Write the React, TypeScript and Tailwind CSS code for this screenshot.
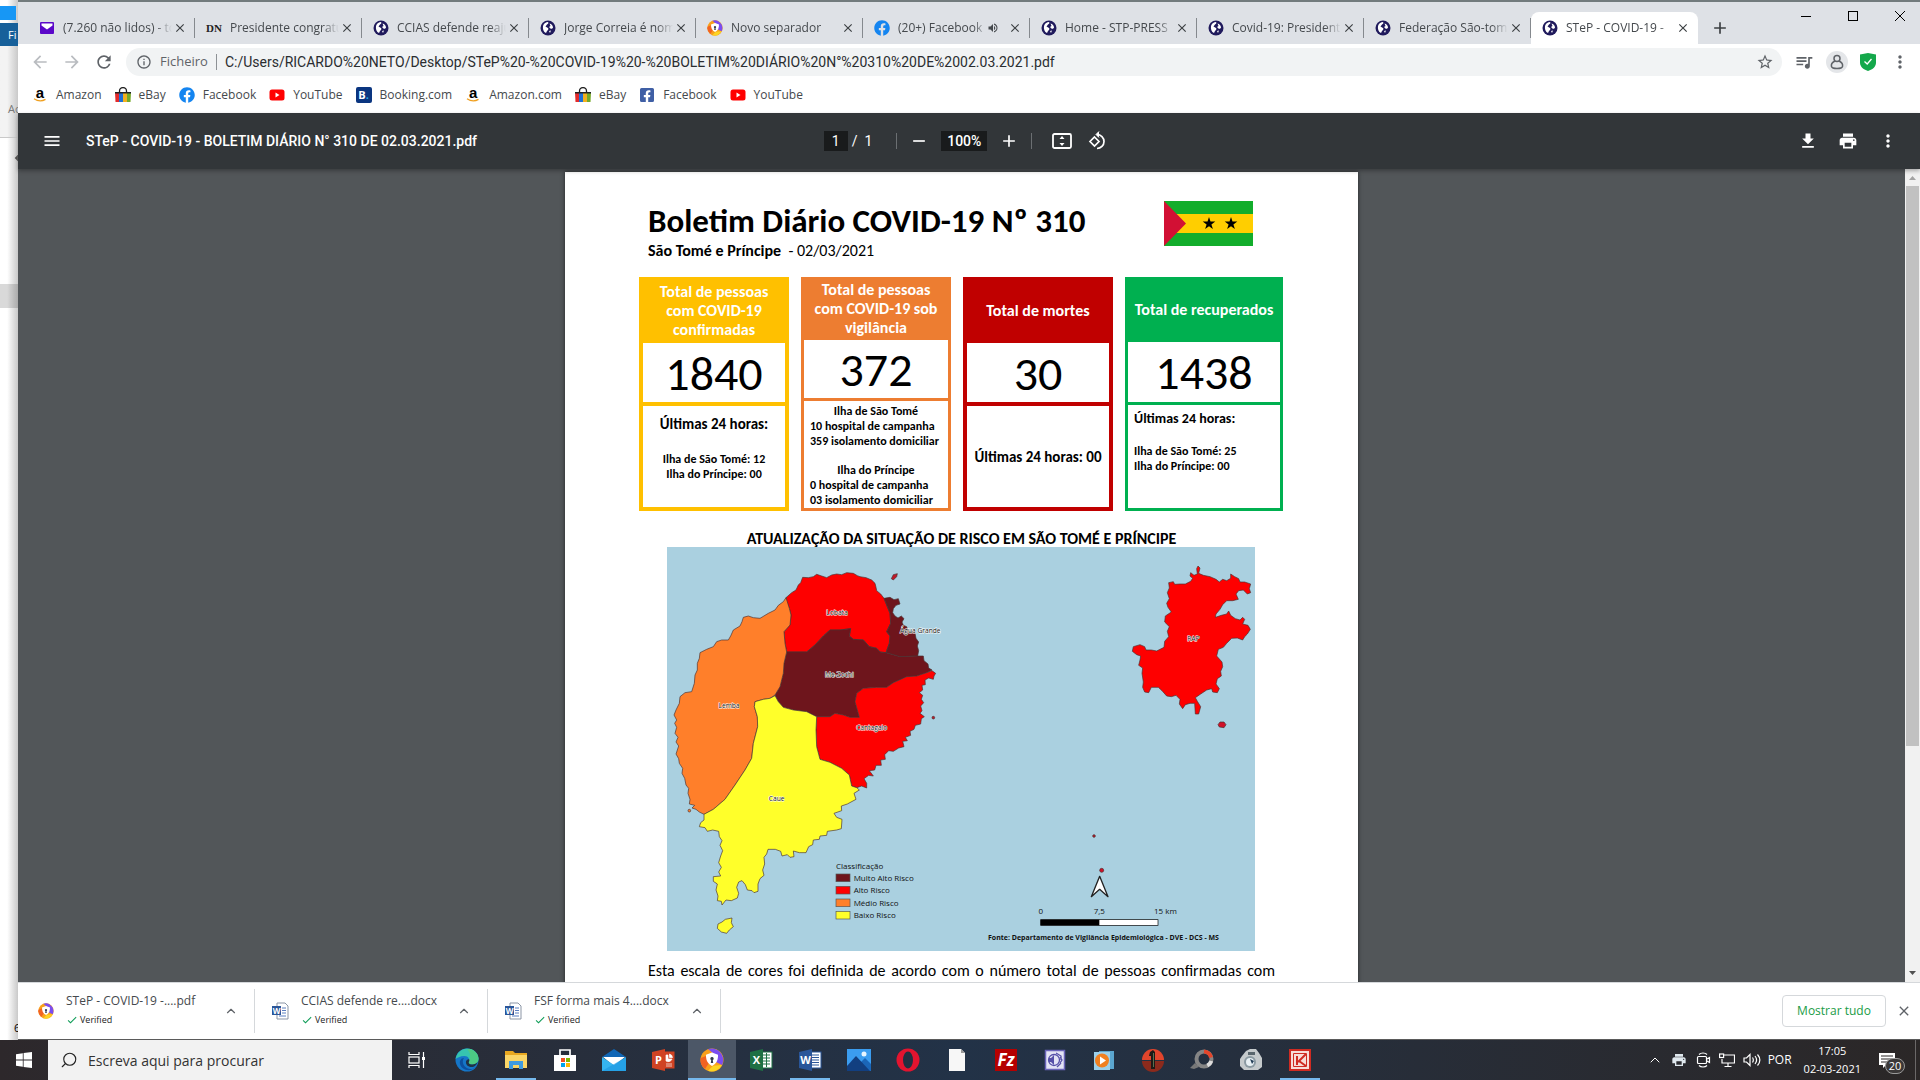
import type { ReactNode } from 'react';
import {
    MdAdd,
    MdArrowBack,
    MdArrowForward,
    MdCheck,
    MdClose,
    MdFileDownload,
    MdInfoOutline,
    MdMenu,
    MdMoreVert,
    MdPrint,
    MdQueueMusic,
    MdRefresh,
    MdRemove,
    MdStarBorder,
    MdVolumeUp,
} from 'react-icons/md';
import { FaFacebook, FaFacebookSquare } from 'react-icons/fa';
import { ChevronUp, Search } from 'lucide-react';

/* ---------- Small logos ---------- */

const GlobeIcon = () => (
    <svg viewBox="0 0 16 16" className="size-4 shrink-0">
        <circle cx="8" cy="8" r="7.500" fill="#201a5c" />
        <path d="M3 6c1-3 3-4 5-4 1 1 0 2-1 2.500L5.500 6.500 8 8c1 1 0 2-1 3l-1 2C3.500 12 2.500 9 3 6zM9.500 3.500c2 .5 3.500 2 3.500 4.500l-2 1-2-2 1.500-1zM9 11l2-.5L10 13z" fill="#fff" />
    </svg>
);

const MailIcon = () => (
    <svg viewBox="0 0 16 16" className="size-4 shrink-0">
        <rect x="1" y="2" width="14" height="12" rx="1" fill="#5b08c9" />
        <path d="M2.500 3.500h11v2L8 9.500 2.500 5.500z" fill="#fff" />
    </svg>
);

const DnIcon = () => <span className="w-4 shrink-0 font-['Liberation_Serif',serif] text-[11px] font-bold text-[#222]">DN</span>;

const AvastIcon = ({ className = 'size-4' }: { className?: string }) => (
    <svg viewBox="0 0 24 24" className={`${className} shrink-0`}>
        <circle cx="12" cy="12" r="11.500" fill="#f9a01b" />
        <path d="M12 .5A11.500 11.500 0 0 1 22 17l-6-3-2-8-6-5z" fill="#7b4df0" />
        <path d="M.7 10A11.500 11.500 0 0 0 5 21l4-6-3-7z" fill="#f26322" />
        <path d="M22 17A11.500 11.500 0 0 1 8 22.800l5-5z" fill="#fcd423" />
        <path d="M12 4.500l6 2.200c.2 5-1.500 9-6 11.300-4.500-2.300-6.200-6.300-6-11.300z" fill="#fff" />
        <path d="M12 9a1.700 1.700 0 0 1 .8 3.200l.4 2.800h-2.400l.4-2.800A1.700 1.700 0 0 1 12 9z" fill="#333c4d" />
    </svg>
);

const AmazonIcon = () => (
    <span className="flex w-4 shrink-0 flex-col items-center">
        <span className="font-['Liberation_Sans',sans-serif] text-[15px] font-bold leading-[11px] text-black">a</span>
        <svg viewBox="0 0 14 4" className="h-1 w-3.5">
            <path d="M1 .8c4 2.600 8 2.600 11.500.6" fill="none" stroke="#f0a020" strokeWidth="1.300" />
        </svg>
    </span>
);

const EbayIcon = () => (
    <svg viewBox="0 0 16 16" className="size-4 shrink-0">
        <path d="M4.500 6V4a3.500 3.500 0 0 1 7 0v2" fill="none" stroke="#222" strokeWidth="1.300" />
        <path d="M0 5h4v10H.5z" fill="#e32b2b" />
        <path d="M4 5h4v10H4z" fill="#1f6fd6" />
        <path d="M8 5h4v10H8z" fill="#f2b01e" />
        <path d="M12 5h4l-.5 10H12z" fill="#75a928" />
        <path d="M0 5h16v1.500H0z" fill="#222" />
    </svg>
);

const YoutubeIcon = () => (
    <svg viewBox="0 0 16 16" className="size-4 shrink-0">
        <rect x=".5" y="2.500" width="15" height="11" rx="2.500" fill="#f00" />
        <path d="M6.500 5.500l4 2.500-4 2.500z" fill="#fff" />
    </svg>
);

const BookingIcon = () => (
    <span className="flex size-4 shrink-0 items-center justify-center rounded-[2px] bg-[#0a3580] text-[11px] font-bold leading-none text-white">
        B<span className="text-[#2aa8e0]">.</span>
    </span>
);

/* ---------- Data ---------- */

const tabs: { title: string; icon: ReactNode; active?: boolean; audio?: boolean }[] = [
    { title: '(7.260 não lidos) - to', icon: <MailIcon /> },
    { title: 'Presidente congratu', icon: <DnIcon /> },
    { title: 'CCIAS defende reaju', icon: <GlobeIcon /> },
    { title: 'Jorge Correia é nom', icon: <GlobeIcon /> },
    { title: 'Novo separador', icon: <AvastIcon /> },
    { title: '(20+) Facebook', icon: <FaFacebook className="size-4 shrink-0 text-[#1585f0]" />, audio: true },
    { title: 'Home - STP-PRESS', icon: <GlobeIcon /> },
    { title: 'Covid-19: President', icon: <GlobeIcon /> },
    { title: 'Federação São-tom', icon: <GlobeIcon /> },
    { title: 'STeP - COVID-19 -', icon: <GlobeIcon />, active: true },
];

const bookmarks: { label: string; icon: ReactNode }[] = [
    { label: 'Amazon', icon: <AmazonIcon /> },
    { label: 'eBay', icon: <EbayIcon /> },
    { label: 'Facebook', icon: <FaFacebook className="size-4 text-[#1585f0]" /> },
    { label: 'YouTube', icon: <YoutubeIcon /> },
    { label: 'Booking.com', icon: <BookingIcon /> },
    { label: 'Amazon.com', icon: <AmazonIcon /> },
    { label: 'eBay', icon: <EbayIcon /> },
    { label: 'Facebook', icon: <FaFacebookSquare className="size-4 text-[#3f5fa5]" /> },
    { label: 'YouTube', icon: <YoutubeIcon /> },
];

const WordFileIcon = () => (
    <svg viewBox="0 0 18 18" className="size-[18px] shrink-0">
        <path d="M6 1h8l3 3v13H6z" fill="#fff" stroke="#8b95a5" />
        <path d="M11 6h4M11 8.500h4M11 11h4M8 14h7" stroke="#5b7fc0" />
        <rect x="1" y="4" width="9" height="9" fill="#2a5699" />
        <text x="5.500" y="11.500" fontSize="8" fontWeight="700" textAnchor="middle" fill="#fff">W</text>
    </svg>
);

const downloads = [
    { name: 'STeP - COVID-19 -....pdf', icon: <AvastIcon /> },
    { name: 'CCIAS defende re....docx', icon: <WordFileIcon /> },
    { name: 'FSF forma mais 4....docx', icon: <WordFileIcon /> },
];

/* ---------- Browser chrome ---------- */

function Tab({ title, icon, active, audio }: (typeof tabs)[number]) {
    return (
        <div
            className={`relative flex h-8 w-[167px] items-center pl-[11px] pr-[7px] ${
                active ? 'rounded-t-lg bg-white' : ''
            }`}
        >
            {icon}
            <span className="ml-2 min-w-0 flex-1 overflow-hidden whitespace-nowrap text-[12px] text-[#45494d] [mask-image:linear-gradient(to_right,black_85%,transparent)]">
                {title}
            </span>
            {audio && <MdVolumeUp className="mr-2 size-3 shrink-0 text-[#45494d]" />}
            <button aria-label="Fechar separador" className="flex size-4 shrink-0 items-center justify-center">
                <MdClose className="size-3.5 text-[#3c4043]" />
            </button>
            {!active && <span className="absolute right-0 top-1.5 h-5 w-px bg-[#85898e]" />}
        </div>
    );
}

function TabStrip() {
    return (
        <div className="flex h-[42px] items-end bg-[#dee1e6] pl-2.5">
            {tabs.map((tab) => (
                <Tab key={tab.title} {...tab} />
            ))}
            <button aria-label="Novo separador" className="mb-1.5 ml-3">
                <MdAdd className="size-5 text-[#3c4043]" />
            </button>
            <div className="ml-auto flex gap-[35px] self-start pr-[14px] pt-2 text-black">
                <button aria-label="Minimizar">
                    <svg viewBox="0 0 12 12" className="size-3"><path d="M1 6.500h10" stroke="currentColor" /></svg>
                </button>
                <button aria-label="Maximizar">
                    <svg viewBox="0 0 12 12" className="size-3"><rect x="1.500" y="1.500" width="9" height="9" fill="none" stroke="currentColor" /></svg>
                </button>
                <button aria-label="Fechar">
                    <svg viewBox="0 0 12 12" className="size-3"><path d="M1 1l10 10M11 1L1 11" stroke="currentColor" /></svg>
                </button>
            </div>
        </div>
    );
}

function AddressBar() {
    return (
        <div className="flex h-9 items-center bg-white pl-3 pr-2.5 text-[#5f6368]">
            <button aria-label="Retroceder" className="mr-3"><MdArrowBack className="size-5 text-[#b9bcc0]" /></button>
            <button aria-label="Avançar" className="mr-3"><MdArrowForward className="size-5 text-[#b9bcc0]" /></button>
            <button aria-label="Recarregar"><MdRefresh className="size-5" /></button>
            <div className="ml-3 flex h-7 flex-1 items-center rounded-full bg-[#f1f3f4] pl-2.5 pr-2">
                <MdInfoOutline className="size-4" />
                <span className="ml-2 text-[13px]">Ficheiro</span>
                <span className="mx-2 h-4 w-px bg-[#8d9195]" />
                <input
                    aria-label="Endereço"
                    className="flex-1 bg-transparent font-[Roboto,sans-serif] text-[14px] text-[#2a2d30] outline-none"
                    defaultValue="C:/Users/RICARDO%20NETO/Desktop/STeP%20-%20COVID-19%20-%20BOLETIM%20DIÁRIO%20N°%20310%20DE%2002.03.2021.pdf"
                />
                <button aria-label="Adicionar aos favoritos"><MdStarBorder className="size-[18px]" /></button>
            </div>
            <button aria-label="Multimédia" className="ml-3"><MdQueueMusic className="size-5" /></button>
            <button aria-label="Perfil" className="ml-3 flex size-[22px] items-center justify-center rounded-full bg-[#e4e6e9]">
                <svg viewBox="0 0 16 16" className="size-4" fill="none" stroke="currentColor" strokeWidth="1.500">
                    <circle cx="8" cy="4.500" r="3" />
                    <path d="M6 7C3 8.500 2 10.500 2.500 12.500c.4 1.500 2 2 5.500 2s5.100-.5 5.500-2C14 10.500 13 8.500 10 7" />
                </svg>
            </button>
            <button aria-label="Segurança" className="ml-3">
                <svg viewBox="0 0 16 18" className="h-[18px] w-4">
                    <path d="M8 0l8 1.500v8c0 4-3 7-8 8.500-5-1.500-8-4.500-8-8.500v-8z" fill="#14a84b" />
                    <path d="M4.500 8.500L7.200 11l4.300-5" fill="none" stroke="#fff" strokeWidth="1.300" />
                </svg>
            </button>
            <button aria-label="Menu" className="ml-3.5"><MdMoreVert className="size-5" /></button>
        </div>
    );
}

function Bookmarks() {
    return (
        <nav className="flex h-[33px] items-center gap-[13px] bg-white pl-3.5 pb-1">
            {bookmarks.map((item, i) => (
                <a key={i} href="#" className="flex items-center gap-2 text-[12px] text-[#45494d]">
                    {item.icon}
                    {item.label}
                </a>
            ))}
        </nav>
    );
}

function PdfToolbar() {
    return (
        <header className="relative z-10 flex h-14 items-center bg-[#323639] font-[Roboto,sans-serif] text-white shadow-[0_2px_4px_rgba(0,0,0,0.3)]">
            <div className="flex flex-1 items-center gap-6 pl-6">
                <button aria-label="Menu lateral"><MdMenu className="size-5" /></button>
                <h1 className="text-[14px] font-medium">STeP - COVID-19 - BOLETIM DIÁRIO N° 310 DE 02.03.2021.pdf</h1>
            </div>
            <div className="flex items-center pr-2">
                <input aria-label="Página" defaultValue="1" className="h-5 w-6 bg-[#191b1c] text-center text-[14px] outline-none" />
                <span className="ml-1 text-[14px]">/&nbsp; 1</span>
                <span className="ml-6 h-4 w-px bg-[#6b6f72]" />
                <button aria-label="Reduzir" className="ml-3"><MdRemove className="size-5" /></button>
                <input aria-label="Zoom" defaultValue="100%" className="ml-3 h-5 w-[46px] bg-[#191b1c] text-center text-[14px] font-medium outline-none" />
                <button aria-label="Ampliar" className="ml-3"><MdAdd className="size-5" /></button>
                <span className="ml-3 h-4 w-px bg-[#6b6f72]" />
                <button aria-label="Ajustar à página" className="ml-5">
                    <svg viewBox="0 0 20 20" className="size-5">
                        <rect x="1" y="3" width="18" height="14" rx="1.500" fill="none" stroke="currentColor" strokeWidth="1.800" />
                        <path d="M10 5l2.500 3h-5zM10 15l2.500-3h-5z" fill="currentColor" />
                    </svg>
                </button>
                <button aria-label="Rodar" className="ml-4">
                    <svg viewBox="0 0 20 20" className="size-5" fill="none" stroke="currentColor" strokeWidth="1.700">
                        <path d="M6.500 6L11 10.500 6.500 15 2 10.500z" />
                        <path d="M9 3.500a7 7 0 1 1 0 14" />
                        <path d="M11 .5L8 3.500l3 3" fill="currentColor" strokeWidth="1" />
                    </svg>
                </button>
            </div>
            <div className="flex flex-1 items-center justify-end gap-5 pr-[22px]">
                <button aria-label="Transferir"><MdFileDownload className="size-5" /></button>
                <button aria-label="Imprimir"><MdPrint className="size-5" /></button>
                <button aria-label="Mais ações"><MdMoreVert className="size-5" /></button>
            </div>
        </header>
    );
}

/* ---------- PDF document ---------- */

const Flag = () => (
    <svg viewBox="0 0 89 45" className="h-[45px] w-[89px]">
        <path d="M0 0h89v45H0z" fill="#12ad2b" />
        <path d="M0 13h89v19H0z" fill="#ffce00" />
        <path d="M0 0l22 22.500L0 45z" fill="#d21034" />
        <path id="star" d="M45 16l1.500 4.600h4.800l-3.900 2.800 1.500 4.600-3.900-2.800-3.900 2.800 1.500-4.600-3.900-2.800h4.800z" fill="#000" />
        <use href="#star" x="22" />
    </svg>
);

function RiskMap() {
    return (
        <svg viewBox="0 0 1764 1212" className="h-[404px] w-[588px] bg-[#aad0e0] font-['Open_Sans',sans-serif]">
            <g transform="translate(-21 -51)" stroke="#4a3030" strokeWidth="2" strokeLinejoin="round">
                {/* Lobata */}
                <path fill="#fe0000" d="M378 203L395 188 408 180 415 165 422 158 428 142 445 143 460 140 470 133 485 138 500 143 515 135 530 132 545 134 560 128 580 130 592 137 600 140 618 143 635 150 645 160 648 172 650 182 662 192 672 205 680 225 690 250 692 280 680 305 690 318 688 340 678 368 660 366 650 355 628 350 610 330 580 328 568 318 572 296 540 300 510 300 490 318 465 345 440 366 380 366 375 340 372 305 390 285 393 255 388 235 380 215Z" />
                {/* Água Grande */}
                <path fill="#6e151c" d="M672 205L690 202 702 209 715 206 720 222 708 226 700 236 698 248 705 258 714 264 724 258 732 266 726 276 730 286 740 290 745 305 758 302 765 310 768 325 776 336 772 348 776 362 773 378 720 380 678 368 688 340 690 318 680 305 692 280 690 250 680 225Z" />
                {/* Mé-Zóchi */}
                <path fill="#6e151c" d="M380 366L440 366 465 345 490 318 510 300 540 300 572 296 568 318 580 328 610 330 628 350 650 355 660 366 678 368 720 380 773 378 790 378 792 392 804 402 806 414 816 420 800 428 770 438 740 440 700 458 680 472 650 472 610 475 590 490 585 515 592 540 598 562 570 562 550 555 525 550 510 560 470 560 440 545 400 540 370 532 355 515 345 495 360 470 370 430 372 400Z" />
                {/* Cantagalo */}
                <path fill="#fe0000" d="M800 428L816 422 827 430 822 438 820 448 806 444 795 450 796 464 786 466 788 480 778 488 788 496 784 508 791 518 782 528 786 542 780 550 793 560 784 566 782 582 766 586 762 598 750 604 752 616 736 622 742 632 728 634 732 650 716 654 700 664 686 662 674 674 676 688 662 690 664 706 648 706 644 720 628 722 640 738 626 736 612 746 620 760 620 774 605 768 590 773 575 768 568 735 545 715 510 697 480 688 470 650 468 600 470 560 510 560 525 550 550 555 570 562 598 562 592 540 585 515 590 490 610 475 650 472 680 472 700 458 740 440 770 438Z" />
                {/* Lemba */}
                <path fill="#ff7f2a" d="M378 203L370 215 355 226 345 240 325 250 300 265 280 263 265 258 250 262 246 275 240 288 220 300 212 318 205 330 185 330 170 335 160 350 140 358 120 368 118 385 112 400 112 420 105 435 103 460 95 485 75 488 60 500 58 520 48 540 42 555 50 570 44 580 50 592 45 610 54 622 48 636 56 648 48 672 56 686 58 700 68 715 66 730 74 745 78 765 86 775 84 790 90 808 88 822 104 826 96 834 108 838 118 846 132 853 160 838 195 808 225 765 255 720 275 685 280 640 293 590 292 560 283 530 285 515 310 508 330 505 345 495 360 470 370 430 372 400 380 366 375 340 372 305 390 285 393 255 388 235Z" />
                {/* Caué */}
                <path fill="#ffff2a" d="M132 853L132 870 122 878 118 890 135 893 142 904 158 900 176 904 178 920 186 932 180 946 188 962 182 978 176 998 184 1012 176 1026 182 1038 160 1040 160 1054 172 1062 168 1080 174 1098 172 1112 184 1114 186 1125 198 1110 214 1112 232 1104 236 1090 230 1072 236 1056 246 1052 256 1064 262 1080 276 1082 282 1088 294 1084 294 1062 300 1046 312 1036 308 1020 314 1002 312 982 320 972 324 958 346 958 362 964 366 978 382 974 390 982 402 980 400 963 418 968 438 968 446 950 458 944 460 930 478 928 480 918 500 916 502 904 530 900 544 896 546 868 530 862 522 850 545 842 544 828 562 822 588 808 582 790 598 780 590 773 575 768 568 735 545 715 510 697 480 688 470 650 468 600 470 560 440 545 400 540 370 532 355 515 345 497 330 505 310 508 285 515 283 530 292 560 293 590 280 640 275 685 255 720 225 765 195 808 160 838Z" />
                {/* Ilhéus */}
                <path fill="#ffff2a" d="M174 1182L186 1176 196 1168 216 1164 214 1178 220 1190 208 1200 200 1210 184 1206 172 1195Z" />
                <path fill="#c01828" d="M694 146L700 134 712 131 710 140 700 150Z" />
                <circle cx="820" cy="563" r="4" fill="#c01828" />
                <circle cx="88" cy="842" r="4" fill="#ff7f2a" />
                {/* Príncipe */}
                <g transform="translate(900 0)">
                    <path fill="#fe0000" d="M626 158L640 155 644 163 660 162 676 162 692 154 698 145 690 138 692 128 702 136 712 132 710 116 714 108 720 114 716 130 730 136 750 140 768 148 778 156 788 148 800 152 812 145 812 132 824 140 836 146 840 156 854 156 872 162 868 176 872 188 862 192 850 180 836 182 828 192 835 208 818 212 800 212 788 224 780 238 768 252 766 262 784 256 800 252 806 243 812 256 826 266 840 270 848 262 854 268 848 282 864 286 871 298 862 312 854 320 848 330 832 324 815 325 800 340 790 352 775 358 770 378 786 396 788 410 782 424 784 438 772 446 768 462 778 476 772 488 758 486 755 476 740 480 722 492 706 503 712 514 722 530 716 552 706 552 704 520 690 520 676 524 668 536 658 522 660 508 648 496 634 500 620 498 606 482 595 472 574 472 566 488 554 486 548 472 550 456 546 430 548 414 536 406 540 390 542 378 530 374 517 364 520 350 540 344 554 350 558 360 574 360 590 363 612 352 614 334 626 320 622 304 628 290 614 276 616 258 634 246 624 232 620 220 628 206 622 188 628 174Z" />
                    <path fill="#d01028" d="M774 584L780 576 792 576 798 584 792 593 778 591Z" />
                    <circle cx="402" cy="918" r="4" fill="#c01828" />
                    <circle cx="425" cy="1021" r="6" fill="#d01028" />
                    <path fill="#fff" stroke="#222" strokeWidth="4" d="M419 1039L444 1100 419 1078 394 1100Z" />
                </g>
            </g>
            <g transform="translate(-21 -51)" fontSize="20" fill="#111" textAnchor="middle" stroke="#fff" strokeWidth="3" paintOrder="stroke">
                <text x="531" y="254">Lobata</text>
                <text x="781" y="308">Água Grande</text>
                <text x="538" y="441">Me-Zochi</text>
                <text x="207" y="533">Lemba</text>
                <text x="635" y="599">Cantagalo</text>
                <text x="350" y="812">Caue</text>
                <text x="1600" y="334">RAP</text>
            </g>
            {/* Legenda */}
            <g transform="translate(-21 -51)" fontSize="24" fill="#111">
                <text x="528" y="1017">Classificação</text>
                <text x="581" y="1053">Multo Alto Risco</text>
                <text x="581" y="1090">Alto Risco</text>
                <text x="581" y="1128">Médio Risco</text>
                <text x="581" y="1165">Baixo Risco</text>
                <g stroke="#555" strokeWidth="2">
                    <rect x="528" y="1032" width="42" height="23" fill="#6e151c" />
                    <rect x="528" y="1069" width="42" height="23" fill="#fe0000" />
                    <rect x="528" y="1107" width="42" height="23" fill="#ff7f2a" />
                    <rect x="528" y="1144" width="42" height="23" fill="#ffff2a" />
                </g>
            </g>
            {/* Escala */}
            <g transform="translate(879 -51)" fontSize="24" fill="#111">
                <text x="242" y="1151" textAnchor="middle">0</text>
                <text x="418" y="1151" textAnchor="middle">7,5</text>
                <text x="582" y="1151">15 km</text>
                <rect x="242" y="1169" width="352" height="17" fill="#fff" stroke="#000" strokeWidth="2" />
                <rect x="242" y="1169" width="176" height="17" fill="#000" />
                <text x="84" y="1229" fontSize="21" fontWeight="700">
                    Fonte: Departamento de Vigilância Epidemiológica - DVE - DCS - MS
                </text>
            </g>
        </svg>
    );
}

type StatCardProps = { title: string; total: string; frame: string; divider: string; children: ReactNode };

function StatCard({ title, total, frame, divider, children }: StatCardProps) {
    return (
        <section className={`flex h-[234px] flex-col ${frame}`}>
            <h3 className="flex h-[62px] items-center justify-center px-1 pb-[3px] text-center text-[16px] font-bold leading-[19px] text-white">
                {title}
            </h3>
            <p className={`flex h-[63px] items-center justify-center bg-white pt-0.5 text-[48px] leading-none ${divider}`}>{total}</p>
            <div className="flex-1 bg-white text-[12px] font-bold leading-[15px]">{children}</div>
        </section>
    );
}

function Bulletin() {
    return (
        <article className="mx-auto w-[793px] bg-white pb-10 pt-7 font-[Carlito,Lato,sans-serif] text-black shadow-[0_0_4px_rgba(0,0,0,0.6)]">
            <div className="flex items-start justify-between pl-[83px] pr-[105px]">
                <div>
                    <h2 className="text-[33px] font-bold leading-[42px]">Boletim Diário COVID-19 Nº 310</h2>
                    <p className="mt-px text-[16px] leading-4">
                        <strong>São Tomé e Príncipe</strong>&nbsp; - 02/03/2021
                    </p>
                </div>
                <div className="pt-px">
                    <Flag />
                </div>
            </div>

            <div className="mt-[18px] grid grid-cols-[150px_150px_150px_158px] gap-3 pl-[74px]">
                <StatCard title="Total de pessoas com COVID-19 confirmadas" total="1840" frame="bg-[#ffc000] border-4 border-[#ffc000]" divider="border-b-4 border-[#ffc000]">
                    <div className="pt-2 text-center">
                        <p className="text-[15px] leading-5">Últimas 24 horas:</p>
                        <p className="mt-[18px]">Ilha de São Tomé: 12</p>
                        <p>Ilha do Príncipe: 00</p>
                    </div>
                </StatCard>
                <StatCard title="Total de pessoas com COVID-19 sob vigilância" total="372" frame="bg-[#ed7d31] border-3 border-[#ed7d31]" divider="border-b-3 border-[#ed7d31]">
                    <div className="whitespace-nowrap px-1.5 pt-[3px]">
                        <p className="text-center">Ilha de São Tomé</p>
                        <p>10 hospital de campanha</p>
                        <p>359 isolamento domiciliar</p>
                        <p className="mt-3.5 text-center">Ilha do Príncipe</p>
                        <p>0 hospital de campanha</p>
                        <p>03 isolamento domiciliar</p>
                    </div>
                </StatCard>
                <StatCard title="Total de mortes" total="30" frame="bg-[#c00000] border-4 border-[#c00000]" divider="border-b-4 border-[#c00000]">
                    <p className="flex h-full items-center justify-center whitespace-nowrap pt-0.5 text-[15px]">Últimas 24 horas: 00</p>
                </StatCard>
                <StatCard title="Total de recuperados" total="1438" frame="bg-[#00b050] border-3 border-[#00b050]" divider="border-b-3 border-[#00b050]">
                    <div className="pl-1.5 pt-1.5">
                        <p className="text-[14px]">Últimas 24 horas:</p>
                        <p className="mt-[18px]">Ilha de São Tomé: 25</p>
                        <p>Ilha do Príncipe: 00</p>
                    </div>
                </StatCard>
            </div>

            <h3 className="pt-[19px] text-center text-[16px] font-bold leading-[17px]">
                ATUALIZAÇÃO DA SITUAÇÃO DE RISCO EM SÃO TOMÉ E PRÍNCIPE
            </h3>
            <div className="pl-[102px]">
                <RiskMap />
            </div>
            <p className="mx-[83px] mt-2.5 text-[16px] leading-5 [text-align-last:justify]">
                Esta escala de cores foi definida de acordo com o número total de pessoas confirmadas com
            </p>
        </article>
    );
}

function Viewer() {
    return (
        <main className="flex min-h-0 flex-1 bg-[#525659]">
            <div className="min-w-0 flex-1 overflow-hidden pt-[3px]">
                <Bulletin />
            </div>
            <div className="flex w-[15px] flex-col items-center bg-[#f1f1f1]">
                <svg viewBox="0 0 15 17" className="h-[17px] w-[15px]"><path d="M4 11l3.500-4 3.500 4z" fill="#a3a3a3" /></svg>
                <div className="h-[560px] w-[13px] bg-[#c1c1c1]" />
                <svg viewBox="0 0 15 17" className="mt-auto h-[17px] w-[15px]"><path d="M4 6l3.500 4L11 6z" fill="#505050" /></svg>
            </div>
        </main>
    );
}

function DownloadShelf() {
    return (
        <footer className="flex h-[57px] items-center border-t border-[#d5d8db] bg-white pl-1">
            {downloads.map((file) => (
                <div key={file.name} className="flex h-11 w-[233px] items-center border-r border-[#d5d8db] pl-4 pr-4">
                    {file.icon}
                    <div className="ml-3 flex-1 whitespace-nowrap">
                        <p className="text-[12px] leading-[18px] text-[#45494d]">{file.name}</p>
                        <p className="flex items-center gap-0.5 text-[9px] leading-5 text-[#222]">
                            <MdCheck className="size-3 text-[#0f9d58]" />
                            Verified
                        </p>
                    </div>
                    <button aria-label="Opções"><ChevronUp className="size-3.5 text-[#5f6368]" /></button>
                </div>
            ))}
            <button className="ml-auto h-8 w-[104px] rounded border border-[#d5d8db] text-[12px] text-[#1a9c46]">Mostrar tudo</button>
            <button aria-label="Fechar" className="ml-2.5 mr-2"><MdClose className="size-4 text-[#5f6368]" /></button>
        </footer>
    );
}

/* ---------- Windows taskbar ---------- */

function OfficeIcon({ letter, color, kind }: { letter: string; color: string; kind: 'pie' | 'grid' | 'lines' }) {
    return (
        <svg viewBox="0 0 24 24" className="size-6">
            <rect x="12" y="4" width="11" height="16" fill={kind === 'pie' ? color : '#fff'} stroke={color} />
            {kind === 'lines' && <path d="M14 7h7M14 9.500h7M14 12h7M14 14.500h7M14 17h7" stroke={color} />}
            {kind === 'grid' && <path d="M14 7h7M14 10h7M14 13h7M14 16h7M17.500 5v14" stroke={color} />}
            {kind === 'pie' && <path d="M15 7h2v4h4a4 4 0 0 1-6 2zM18.500 6a4 4 0 0 1 3 3.500h-3zM15 16h6M15 18h6" fill="#fff" stroke="#fff" strokeWidth=".7" />}
            <path d="M1 4l13-3v22L1 20z" fill={color} />
            <text x="7.500" y="16" fontSize="11" fontWeight="700" textAnchor="middle" fill="#fff">{letter}</text>
        </svg>
    );
}

const apps: { name: string; icon: ReactNode; open?: boolean; active?: boolean }[] = [
    {
        name: 'Edge',
        icon: (
            <svg viewBox="0 0 24 24" className="size-6">
                <circle cx="12" cy="12" r="11.500" fill="#1576c8" />
                <path d="M.6 11C2 4 7 .5 12 .5c7 0 11.500 5 11.500 10 0 4-3 6-6.500 6-3 0-4-1.500-3-3 1-2-.5-5.500-4.500-5.500C5 8 2 10 .6 11z" fill="#36c4b0" />
                <path d="M15 1c6 2 8.500 6 8.500 9.500 0 4-3 6-6.500 6-3 0-4-1.500-3-3 1.500-4 2-9-2-12z" fill="#55cf72" opacity=".7" />
                <path d="M9 10c-3 4 0 10 6 11 2 .3 4-.5 6-2-5 5-14 4-16-3-.7-3 1-6 4-6z" fill="#0c4fa0" />
                <path d="M14 13.500c-1 1.500 0 3 3 3 2.500 0 4.500-1 5.700-2.800-.8 3-3.200 5.300-6.200 5.300-3.500 0-6-2.500-5.500-5.500.3-1.500 1.500-2.500 3-2.300.6.600.4 1.500 0 2.300z" fill="#203247" />
            </svg>
        ),
    },
    {
        name: 'Explorador',
        open: true,
        icon: (
            <svg viewBox="0 0 24 24" className="size-6">
                <path d="M1 3h8l2 2h12v15H1z" fill="#e9a820" />
                <path d="M1 7h22v13H1z" fill="#fbd667" />
                <path d="M5 13h14v8h-4v-4H9v4H5z" fill="#3f9be0" />
            </svg>
        ),
    },
    {
        name: 'Microsoft Store',
        icon: (
            <svg viewBox="0 0 24 24" className="size-6">
                <path d="M7 7V2h10v5" fill="none" stroke="#fff" strokeWidth="1.700" />
                <path d="M1 7h22v16H1z" fill="#fff" />
                <path d="M8 10h4v4H8z" fill="#f25022" />
                <path d="M13 10h4v4h-4z" fill="#7fba00" />
                <path d="M8 15h4v4H8z" fill="#00a4ef" />
                <path d="M13 15h4v4h-4z" fill="#ffb900" />
            </svg>
        ),
    },
    {
        name: 'Correio',
        icon: (
            <svg viewBox="0 0 24 24" className="size-6">
                <path d="M0 9l12-8 12 8z" fill="#1066b5" />
                <path d="M1 9h22l-11 9z" fill="#fff" />
                <path d="M0 9l12 8 12-8v14H0z" fill="#35b4f0" />
                <path d="M24 9v14H0z" fill="#1a94e0" opacity=".6" />
            </svg>
        ),
    },
    { name: 'PowerPoint', icon: <OfficeIcon letter="P" color="#d04323" kind="pie" /> },
    { name: 'Avast Browser', icon: <AvastIcon className="size-6" />, open: true, active: true },
    { name: 'Excel', icon: <OfficeIcon letter="X" color="#1f7044" kind="grid" /> },
    { name: 'Word', icon: <OfficeIcon letter="W" color="#2a5699" kind="lines" />, open: true },
    {
        name: 'Fotografias',
        icon: (
            <svg viewBox="0 0 24 24" className="size-6">
                <path d="M0 1h24v22H0z" fill="#3b9df0" />
                <path d="M14 14l4-4 6 6v7H14z" fill="#1b66b8" />
                <path d="M0 18L9 8l14 15H0z" fill="#123f80" />
                <circle cx="17" cy="6" r="2.500" fill="#e8f6ff" />
            </svg>
        ),
    },
    {
        name: 'Opera',
        icon: (
            <svg viewBox="0 0 24 24" className="size-6">
                <ellipse cx="12" cy="12" rx="11.500" ry="11.500" fill="#e3142f" />
                <ellipse cx="12" cy="12" rx="5" ry="8.500" fill="#223042" />
            </svg>
        ),
    },
    {
        name: 'Documento',
        icon: (
            <svg viewBox="0 0 24 24" className="size-6">
                <path d="M4 1h12l4 4v18H4z" fill="#f7f7f7" />
                <path d="M16 1v4h4z" fill="#999" />
            </svg>
        ),
    },
    {
        name: 'FileZilla',
        icon: (
            <svg viewBox="0 0 24 24" className="size-6">
                <rect x="1" y="1" width="22" height="22" fill="#b50000" />
                <text x="12" y="18" fontSize="17" fontWeight="700" fontStyle="italic" textAnchor="middle" fill="#fff">Fz</text>
            </svg>
        ),
    },
    {
        name: 'Som',
        icon: (
            <svg viewBox="0 0 24 24" className="size-6">
                <rect x="2.500" y="2.500" width="19" height="19" fill="#e4e4f5" stroke="#6a64b8" strokeWidth="1.500" />
                <path d="M6 10h2l3-3v10l-3-3H6z" fill="#5650a8" />
                <circle cx="11" cy="12" r="5.500" fill="none" stroke="#5650a8" strokeWidth="1.300" />
                <path d="M13 5l5 3v4M18 15l-4 4M17 9l2 3-2 3" fill="none" stroke="#5650a8" strokeWidth="1.300" />
            </svg>
        ),
    },
    {
        name: 'Media Player',
        icon: (
            <svg viewBox="0 0 24 24" className="size-6">
                <rect x="7" y="3" width="15" height="18" fill="#5ba6cf" />
                <rect x="2" y="4" width="16" height="18" fill="#9cd0ea" />
                <circle cx="10" cy="12.500" r="7" fill="#f08020" />
                <path d="M8 8.500l6 4-6 4z" fill="#fff" />
            </svg>
        ),
    },
    {
        name: 'Gravador',
        icon: (
            <svg viewBox="0 0 24 24" className="size-6">
                <path d="M1 12a11 11 0 0 1 22 0z" fill="#e2452c" />
                <path d="M1 13h22a11 11 0 0 1-22 0z" fill="#8c2a1c" />
                <path d="M9 4l3-2 2 2v17h-4V8H8z" fill="#1d1a16" />
                <path d="M12.500 5v14" stroke="#577050" />
            </svg>
        ),
    },
    {
        name: 'CCleaner',
        icon: (
            <svg viewBox="0 0 24 24" className="size-6">
                <path d="M0 20l5-5 4 4-5 2z" fill="#777" />
                <circle cx="14" cy="11" r="7.500" fill="none" stroke="#858585" strokeWidth="4" />
                <path d="M14 3.500a7.500 7.500 0 0 1 7 6" fill="none" stroke="#e5452a" strokeWidth="4" />
                <path d="M21.300 13a7.500 7.500 0 0 1-4 4.500" fill="none" stroke="#ddd" strokeWidth="4" />
            </svg>
        ),
    },
    {
        name: 'Câmara',
        icon: (
            <svg viewBox="0 0 24 24" className="size-6">
                <path d="M3 8l4-5 4-2h6l3 4 3 5v9l-4 3H5l-4-4V11z" fill="#c5cacc" />
                <circle cx="11" cy="14" r="6" fill="#8b9aa2" />
                <circle cx="11" cy="14" r="4" fill="#e8f0f4" />
                <path d="M9 4h7v3H9z" fill="#59666d" />
                <path d="M11 11l4 2-2 3z" fill="#243f58" />
            </svg>
        ),
    },
    {
        name: 'Editor',
        open: true,
        icon: (
            <svg viewBox="0 0 24 24" className="size-6">
                <rect x="2" y="2" width="20" height="20" fill="#f7dcd8" stroke="#cf2b22" strokeWidth="2" />
                <path d="M5.500 18.500v-13h13v13z" fill="none" stroke="#cf2b22" />
                <path d="M18 6l-8 8M9 8v9M11 13l7 5" fill="none" stroke="#cf2b22" strokeWidth="2" />
            </svg>
        ),
    },
];

function Taskbar() {
    return (
        <div className="flex h-10 items-stretch bg-linear-to-r from-[#2d282b] via-[#223247] to-[#2b2727] text-white">
            <button aria-label="Iniciar" className="flex w-12 items-center justify-center">
                <svg viewBox="0 0 16 16" className="size-4" fill="#fff">
                    <path d="M0 2.200L6.800 1.200v6.400H0zM7.600 1.100L16 0v7.600H7.600zM0 8.400h6.800v6.400L0 13.800zM7.600 8.400H16V16l-8.400-1.100z" />
                </svg>
            </button>
            <label className="flex w-[344px] items-center gap-2.5 bg-[#f2f2f2] pl-3 text-[#222]">
                <Search className="size-[18px] -scale-x-100" strokeWidth={1.5} />
                <input
                    aria-label="Procurar"
                    placeholder="Escreva aqui para procurar"
                    className="flex-1 bg-transparent text-[14px] outline-none placeholder:text-[#333]"
                />
            </label>
            <button aria-label="Vista de tarefas" className="flex w-[49px] items-center justify-center">
                <svg viewBox="0 0 18 16" className="h-4 w-[18px]" fill="none" stroke="#fff" strokeWidth="1.200">
                    <path d="M1 0v2.500h10V0M1 16v-2.500h10V16M15.500 0v16" />
                    <rect x="1" y="5" width="10" height="6" />
                    <path d="M14 5h3v3h-3z" fill="#fff" stroke="none" />
                </svg>
            </button>
            <div className="ml-0.5 flex gap-px">
                {apps.map((app) => (
                    <button
                        key={app.name}
                        aria-label={app.name}
                        className={`relative flex w-12 items-center justify-center ${app.active ? 'bg-[#4c5767]' : ''}`}
                    >
                        {app.icon}
                        {app.open && (
                            <span className={`absolute bottom-0 h-0.5 bg-[#76b9ed] ${app.active ? 'inset-x-0' : 'inset-x-1'}`} />
                        )}
                    </button>
                ))}
            </div>
            <div className="ml-auto flex items-center">
                <ChevronUp className="size-4" strokeWidth={1.5} />
                <MdPrint className="ml-2 size-4 text-[#dfe8ee]" />
                <svg viewBox="0 0 16 16" className="ml-2 size-4" fill="none" stroke="#fff" strokeWidth="1.200">
                    <path d="M4 2.500C6 .5 10 .5 12 2.500M4 13.500c2 2 6 2 8 0M12 7l2.500-1.500v5L12 9" />
                    <rect x="2.500" y="4.500" width="9" height="7" rx="1" />
                </svg>
                <svg viewBox="0 0 16 16" className="ml-2 size-4" fill="none" stroke="#fff" strokeWidth="1.200">
                    <path d="M5 3h10.500v8H3V7M9 11v3M5.500 14.500h7" />
                    <rect x=".6" y="2" width="4" height="3.500" />
                </svg>
                <svg viewBox="0 0 18 16" className="ml-2 h-4 w-[18px]" fill="none" stroke="#fff" strokeWidth="1.200">
                    <path d="M1 6h2.500L7 2.500v11L3.500 10H1zM9.500 5.500c1 1.500 1 3.500 0 5M12 4c2 2.500 2 5.500 0 8M14.500 2.500c3 3.500 3 7.500 0 11" />
                </svg>
                <span className="ml-[7px] text-[12px]">POR</span>
                <div className="ml-3 text-center text-[11px] leading-[18px]">
                    <p>17:05</p>
                    <p>02-03-2021</p>
                </div>
                <button aria-label="Notificações" className="relative ml-4 mr-2.5 h-7 w-7">
                    <svg viewBox="0 0 20 20" className="size-5">
                        <path d="M2 3h16v12H9l-3 3v-3H2z" fill="#fff" />
                        <path d="M4 6h12M4 9h12M4 12h8" stroke="#2b2727" strokeWidth="1.200" />
                    </svg>
                    <span className="absolute bottom-0 right-0 flex h-4 w-5 items-center justify-center rounded-full border border-[#9a9a9a] bg-[#3b3838] text-[11px]">
                        20
                    </span>
                </button>
                <span className="mr-1 h-10 w-px bg-[#6b6868]" />
            </div>
        </div>
    );
}

// Edge of the word processor window that sits behind the browser
function BackgroundWindow() {
    return (
        <aside className="flex w-[18px] shrink-0 flex-col overflow-hidden whitespace-nowrap bg-linear-to-r from-white from-40% to-[#c9c9c9] text-[11px]">
            <div className="mt-1.5 h-3.5 w-4 bg-[#1797f5]" />
            <div className="mt-[3px] h-[23px] bg-[#17609a] pl-2 leading-[23px] text-white">Fi</div>
            <div className="h-[92px] border-b border-[#c9c9c9] bg-linear-to-r from-[#f3f3f3] from-40% to-[#c9c9c9] pl-2 pt-[55px] leading-4 text-[#777]">Ac</div>
            <MdArrowBack className="ml-3 mt-3 size-4 shrink-0 text-[#555]" />
            <div className="mt-[118px] h-6 bg-black/15" />
            <span className="mb-1 mt-auto pl-3.5">6</span>
        </aside>
    );
}

export default function App() {
    return (
        <div className="flex h-screen flex-col overflow-hidden font-['Open_Sans','Noto_Sans',sans-serif]">
            <div className="flex min-h-0 flex-1">
                <BackgroundWindow />
                <div className="flex min-w-0 flex-1 flex-col border-b border-t-2 border-t-[#727b7d] border-b-[#5a5a5a] bg-white">
                    <TabStrip />
                    <AddressBar />
                    <Bookmarks />
                    <PdfToolbar />
                    <Viewer />
                    <DownloadShelf />
                </div>
            </div>
            <Taskbar />
        </div>
    );
}
